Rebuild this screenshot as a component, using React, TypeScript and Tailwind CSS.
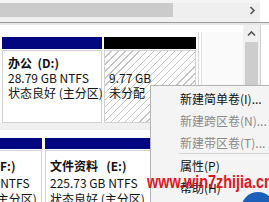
const hatch =
  "bg-[repeating-linear-gradient(135deg,#ffffff_0px,#ffffff_4px,#c4c4c4_4px,#c4c4c4_5px)]";

function Partition({
  name,
  size,
  status,
  bar,
  className,
  pt,
}: {
  name: string;
  size: string;
  status: string;
  bar: string;
  className: string;
  pt: string;
}) {
  return (
    <div className={`flex flex-col shrink-0 ${className}`}>
      <div className={`h-[12px] ${bar}`} />
      <div className={`mt-[1px] h-[73px] border border-[#d2d2d2] bg-white pl-[5px] whitespace-pre ${pt}`}>
        <div className="font-bold">{name}</div>
        <div>{size}</div>
        <div>{status}</div>
      </div>
    </div>
  );
}

function MenuItem({ label, disabled }: { label: string; disabled?: boolean }) {
  return (
    <div
      className={`h-[22px] flex items-center pl-[29px] whitespace-nowrap ${
        disabled ? "text-[#8a8a8a]" : "text-[#111]"
      }`}
    >
      {label}
    </div>
  );
}

export default function App() {
  return (
    <div className="relative w-[269px] h-[202px] overflow-hidden bg-white font-['Noto_Sans_CJK_SC',sans-serif] text-[12px] leading-[15px] text-[#111]">
      {/* horizontal scrollbar */}
      <div className="h-[3px] w-[260px] bg-[#f4f4f4]" />
      <div className="flex h-[14px] w-[260px] bg-[#efefef]">
        <div className="w-[173px] bg-[#cbcbcb]" />
        <div className="flex-1" />
        <div className="w-[16px] flex items-center justify-center">
          <svg width="7" height="9" viewBox="0 0 7 9">
            <path d="M1.5 1 L5 4.5 L1.5 8" fill="none" stroke="#555" strokeWidth="1.6" />
          </svg>
        </div>
      </div>
      <div className="h-[5px] w-[260px] bg-[#f0f0f0]" />
      <div className="h-px bg-[#9c9c9c]" />
      <div className="h-[2px] bg-[#e6e6e6]" />

      <div className="flex h-[177px]">
        {/* disk area */}
        <div className="w-[243px] flex flex-col overflow-hidden">
          {/* disk 1 */}
          <div className="flex items-start pt-[7px] h-[98px] shrink-0">
            <Partition
              className="ml-[2px] w-[100px] mt-[5px]"
              bar="bg-[#02067f]"
              pt="pt-[4px]"
              name={"办公  (D:)"}
              size="28.79 GB NTFS"
              status="状态良好 (主分区)"
            />
            <div className="ml-[2px] w-[92px] mt-[5px] flex flex-col shrink-0">
              <div className="h-[12px] bg-black" />
              <div className={`mt-[1px] h-[73px] border border-[#d2d2d2] pl-[4px] pt-[19px] ${hatch}`}>
                <div>9.77 GB</div>
                <div>未分配</div>
              </div>
            </div>
            <div className="ml-[2px] w-px h-[92px] bg-[#d6d6d6]" />
            <div className="ml-[2px] w-px h-[92px] bg-[#e2e2e2]" />
            <div className="flex-1 h-[92px] bg-[#fafafa]" />
          </div>
          <div className="h-[7px] shrink-0 bg-[#f0f0f0]" />
          <div className="h-[8px] shrink-0 bg-white" />
          {/* disk 2 */}
          <div className="flex items-start shrink-0 leading-[16.5px]">
            <div className="ml-[-64px] w-[106px] flex flex-col shrink-0">
              <div className="h-[11px] bg-[#02067f]" />
              <div className="mt-[1px] h-[70px] border border-[#d2d2d2] bg-white pl-[5px] pt-[7px] whitespace-pre">
                <div className="font-bold">{"软件程序  (F:)"}</div>
                <div>125.65 GB NTFS</div>
                <div>状态良好 (主分区)</div>
              </div>
            </div>
            <div className="ml-[3px] w-[160px] flex flex-col shrink-0">
              <div className="h-[11px] bg-[#02067f]" />
              <div className="mt-[1px] h-[70px] border border-[#d2d2d2] bg-white pl-[4px] pt-[7px] whitespace-pre">
                <div className="font-bold">{"文件资料   (E:)"}</div>
                <div>225.73 GB NTFS</div>
                <div>状态良好 (主分区)</div>
              </div>
            </div>
          </div>
        </div>

        {/* vertical scrollbar */}
        <div className="w-[17px] flex flex-col items-center bg-[#f0f0f0]">
          <div className="h-[17px] flex items-center justify-center">
            <svg width="9" height="7" viewBox="0 0 9 7">
              <path d="M1 5.5 L4.5 2 L8 5.5" fill="none" stroke="#555" strokeWidth="1.6" />
            </svg>
          </div>
          <div className="w-[13px] h-[100px] bg-[#cdcdcd]" />
        </div>
        <div className="w-px bg-[#cfcfcf]" />
        <div className="flex-1 bg-white" />
      </div>

      {/* context menu */}
      <div className="absolute left-[150px] top-[85px] w-[130px] h-[130px] bg-[#f4f4f4] border border-[#b4b4b4] shadow-[2px_2px_3px_rgba(0,0,0,0.25)] pt-px">
        <MenuItem label="新建简单卷(I)..." />
        <MenuItem label="新建跨区卷(N)..." disabled />
        <MenuItem label="新建带区卷(T)..." disabled />
        <div className="ml-[28px] h-px bg-[#d4d4d4]" />
        <MenuItem label="属性(P)" />
        <MenuItem label="帮助(H)" />
      </div>

      {/* watermark */}
      <div className="absolute left-[241px] top-[192px] w-[34px] h-[34px] rounded-full bg-[#1b5fb8]" />
      <div className="absolute left-[147px] top-[173px] origin-left scale-x-[0.8] whitespace-nowrap font-['Liberation_Sans',Arial,sans-serif] font-bold text-[18px] leading-none text-[#e3141c]">
        www.win7zhijia.cn
      </div>
    </div>
  );
}
